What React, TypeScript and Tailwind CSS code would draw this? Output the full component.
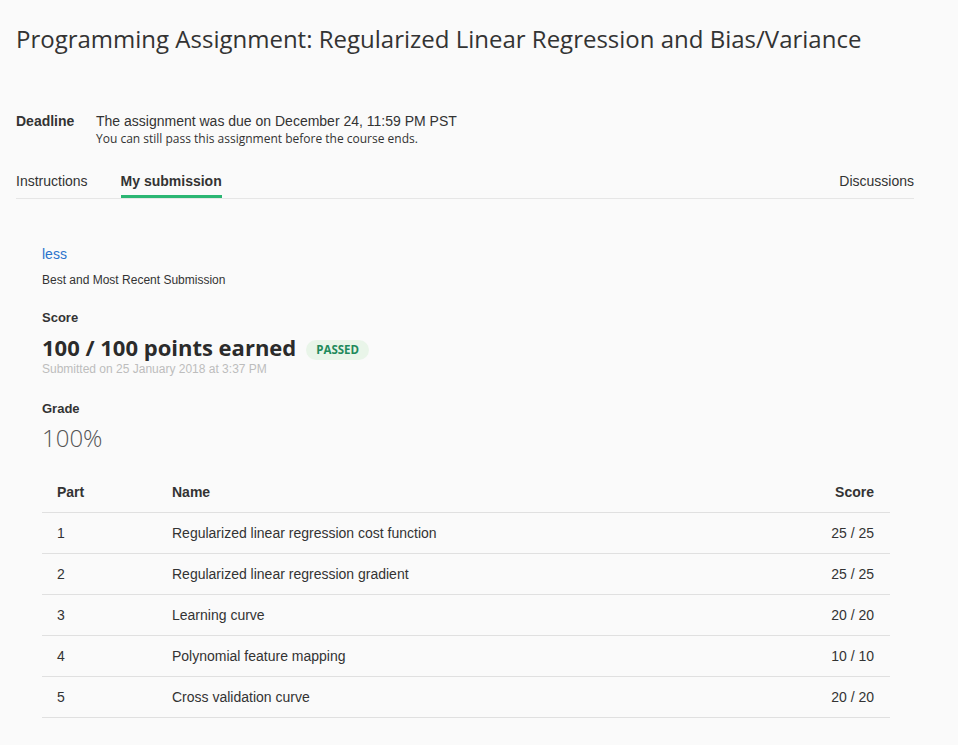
const parts = [
  { part: 1, name: 'Regularized linear regression cost function', score: '25 / 25' },
  { part: 2, name: 'Regularized linear regression gradient', score: '25 / 25' },
  { part: 3, name: 'Learning curve', score: '20 / 20' },
  { part: 4, name: 'Polynomial feature mapping', score: '10 / 10' },
  { part: 5, name: 'Cross validation curve', score: '20 / 20' },
];

const openSans = { fontFamily: '"Open Sans", sans-serif' };

const App: React.FC = () => {
  return (
    <div className="min-h-[745px] w-full bg-[#fafafa] px-[16px] pt-[23px] pb-[40px] text-[#333] font-['Liberation_Sans',Arial,sans-serif]">
      <h1 className="font-['Open_Sans',sans-serif] text-[24px] leading-[32px] font-normal text-[#333]">
        Programming Assignment: Regularized Linear Regression and Bias/Variance
      </h1>

      {/* deadline */}
      <div className="mt-[56px] flex">
        <div className="w-[80px] text-[14px] leading-[20px] font-bold">Deadline</div>
        <div>
          <div className="text-[14px] leading-[20px]">The assignment was due on December 24, 11:59 PM PST</div>
          <div className="font-['Open_Sans',sans-serif] text-[12px] leading-[16px]">
            You can still pass this assignment before the course ends.
          </div>
        </div>
      </div>

      {/* tabs */}
      <div className="mt-[24px] flex w-[898px] items-end border-b border-[#e6e6e6] text-[14px] leading-[20px]">
        <a href="#" className="border-b-[3px] border-transparent pb-[4px]">Instructions</a>
        <a href="#" className="ml-[33px] border-b-[3px] border-[#2bb673] pb-[4px] font-bold">My submission</a>
        <a href="#" className="ml-auto border-b-[3px] border-transparent pb-[4px]">Discussions</a>
      </div>

      <div className="pl-[26px]">
        <a href="#" className="mt-[45px] block text-[14px] leading-[20px] text-[#2a73cc]">less</a>
        <div className="mt-[8px] text-[12px] leading-[16px]">Best and Most Recent Submission</div>

        <div className="mt-[21px] text-[13px] leading-[18px] font-bold">Score</div>
        <div className="mt-[7px] flex items-center">
          <span className="font-['Open_Sans',sans-serif] text-[22px] leading-[27px] font-bold text-[#2b2b2b]">
            100 / 100 points earned
          </span>
          <span
            style={openSans}
            className="mt-[5px] ml-[10px] rounded-full bg-[#e9f5e9] px-[10px] text-[11.5px] leading-[20px] font-bold text-[#1f8a5c]"
          >
            PASSED
          </span>
        </div>
        <div className="text-[12px] leading-[16px] text-[#bdbdbd]">Submitted on 25 January 2018 at 3:37 PM</div>

        <div className="mt-[23px] text-[13px] leading-[18px] font-bold">Grade</div>
        <div className="mt-[4px] font-['Open_Sans',sans-serif] text-[24px] leading-[32px] font-light text-[#555]">100%</div>

        <table className="mt-[18px] w-[848px] border-collapse text-[14px] leading-[20px]">
          <thead>
            <tr className="border-b border-[#e0e0e0]">
              <th className="w-[130px] py-[10px] pl-[15px] text-left font-bold">Part</th>
              <th className="py-[10px] text-left font-bold">Name</th>
              <th className="py-[10px] pr-[16px] text-right font-bold">Score</th>
            </tr>
          </thead>
          <tbody>
            {parts.map((p) => (
              <tr key={p.part} className="border-b border-[#e0e0e0]">
                <td className="py-[10px] pl-[15px]">{p.part}</td>
                <td className="py-[10px]">{p.name}</td>
                <td className="py-[10px] pr-[16px] text-right">{p.score}</td>
              </tr>
            ))}
          </tbody>
        </table>
      </div>
    </div>
  );
};

export default App;
